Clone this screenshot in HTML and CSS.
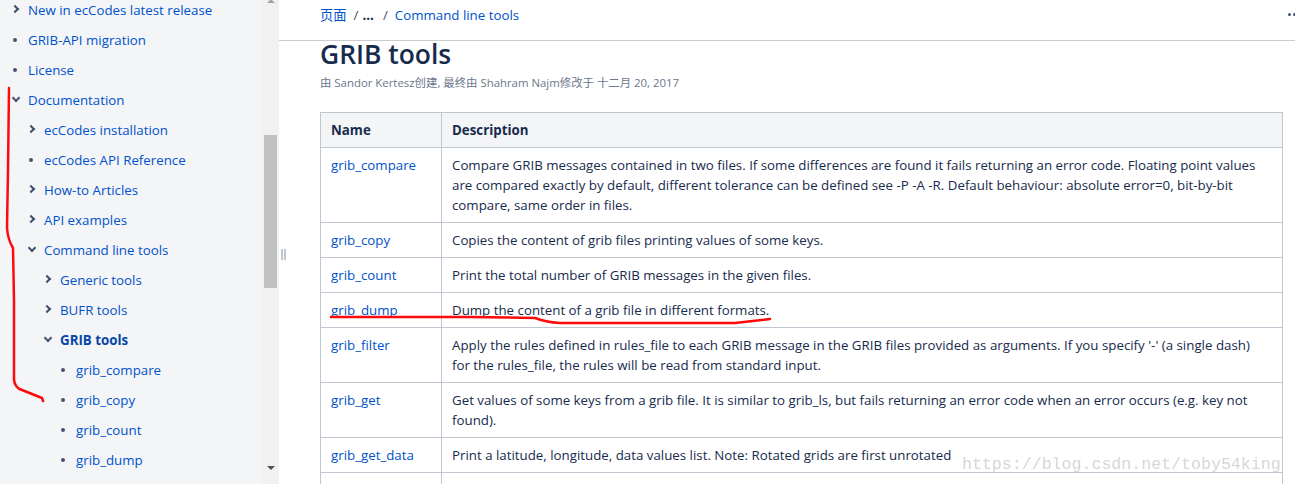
FILE: index.html
```html
<!DOCTYPE html>
<html lang="zh">
<head>
<meta charset="utf-8">
<title>GRIB tools</title>
<link rel="stylesheet" href="styles.css">
</head>
<body>
<div class="page">
  <aside class="sidebar">
    <ul class="tree">
      <li class="item l1"><span class="chev right"></span><a>New in ecCodes latest release</a></li>
      <li class="item l1"><span class="dot"></span><a>GRIB-API migration</a></li>
      <li class="item l1"><span class="dot"></span><a>License</a></li>
      <li class="item l1"><span class="chev down"></span><a>Documentation</a></li>
      <li class="item l2"><span class="chev right"></span><a>ecCodes installation</a></li>
      <li class="item l2"><span class="dot"></span><a>ecCodes API Reference</a></li>
      <li class="item l2"><span class="chev right"></span><a>How-to Articles</a></li>
      <li class="item l2"><span class="chev right"></span><a>API examples</a></li>
      <li class="item l2"><span class="chev down"></span><a>Command line tools</a></li>
      <li class="item l3"><span class="chev right"></span><a>Generic tools</a></li>
      <li class="item l3"><span class="chev right"></span><a>BUFR tools</a></li>
      <li class="item l3 current"><span class="chev down"></span><a>GRIB tools</a></li>
      <li class="item l4"><span class="dot"></span><a>grib_compare</a></li>
      <li class="item l4"><span class="dot"></span><a>grib_copy</a></li>
      <li class="item l4"><span class="dot"></span><a>grib_count</a></li>
      <li class="item l4"><span class="dot"></span><a>grib_dump</a></li>
    </ul>
  </aside>
  <div class="scrollbar">
    <div class="sb-up"></div>
    <div class="sb-thumb"></div>
    <div class="sb-down"></div>
  </div>
  <main class="main">
    <div class="handle"><span></span><span></span></div>
    <header class="topbar">
      <nav class="crumbs"><a>页面</a><span class="sep">/</span><span class="ell">...</span><span class="sep sep-last">/</span><a>Command line tools</a></nav>
      <div class="more"><span></span><span></span><span></span></div>
    </header>
    <h1 class="title">GRIB tools</h1>
    <div class="byline">由 Sandor Kertesz创建, 最终由 Shahram Najm修改于 十二月 20, 2017</div>
    <table class="tools">
      <colgroup><col class="col-name"><col></colgroup>
      <thead>
        <tr><th>Name</th><th>Description</th></tr>
      </thead>
      <tbody>
        <tr><td><a>grib_compare</a></td><td>Compare GRIB messages contained in two files. If some differences are found it fails returning an error code. Floating point values are compared exactly by default, different tolerance can be defined see -P -A -R. Default behaviour: absolute error=0, bit-by-bit compare, same order in files.</td></tr>
        <tr><td><a>grib_copy</a></td><td>Copies the content of grib files printing values of some keys.</td></tr>
        <tr><td><a>grib_count</a></td><td>Print the total number of GRIB messages in the given files.</td></tr>
        <tr><td><a>grib_dump</a></td><td>Dump the content of a grib file in different formats.</td></tr>
        <tr><td><a>grib_filter</a></td><td>Apply the rules defined in rules_file to each GRIB message in the GRIB files provided as arguments. If you specify '-' (a single dash)<br>for the rules_file, the rules will be read from standard input.</td></tr>
        <tr><td><a>grib_get</a></td><td>Get values of some keys from a grib file. It is similar to grib_ls, but fails returning an error code when an error occurs (e.g. key not found).</td></tr>
        <tr><td><a>grib_get_data</a></td><td>Print a latitude, longitude, data values list. Note: Rotated grids are first unrotated</td></tr>
        <tr class="empty"><td></td><td></td></tr>
      </tbody>
    </table>
  </main>
</div>
<div class="watermark">https://blog.csdn.net/toby54king</div>
<svg class="ink" width="1295" height="484" viewBox="0 0 1295 484">
  <path d="M9 88 L8 170 L7 228 Q8 240 13 248 L14 300 L14 380 Q15 388 22 390 L42 398 L43 401" />
  <path d="M331 317 L470 317 L535 318 Q545 322 560 323 L735 323 L770 319" />
</svg>
</body>
</html>
```

FILE: styles.css
```css
* { box-sizing: border-box; }
html, body { margin: 0; padding: 0; }
body {
  width: 1295px;
  height: 484px;
  overflow: hidden;
  font-family: "Open Sans", "Noto Sans", "Noto Sans CJK SC", sans-serif;
  font-size: 13.3px;
  color: #172b4d;
  background: #fff;
  position: relative;
}
a { color: #0052cc; text-decoration: none; }

.page { display: flex; height: 484px; }

/* sidebar */
.sidebar {
  width: 262px;
  flex: none;
  background: #f4f5f7;
  overflow: hidden;
}
.tree { list-style: none; margin: -5px 0 0 0; padding: 0; }
.item {
  height: 30px;
  display: flex;
  align-items: center;
  white-space: nowrap;
}
.item a { line-height: 20px; }
.l1 { padding-left: 10px; }
.l2 { padding-left: 26px; }
.l3 { padding-left: 42px; }
.l4 { padding-left: 58px; }
.current a { font-weight: 700; color: #0747a6; }
.chev, .dot {
  width: 18px;
  height: 20px;
  flex: none;
  position: relative;
}
.dot::before {
  content: "";
  position: absolute;
  left: 3px; top: 8px;
  width: 4px; height: 4px;
  border-radius: 50%;
  background: #42526e;
}
.chev::before {
  content: "";
  position: absolute;
  width: 4px; height: 4px;
  border-right: 2px solid #42526e;
  border-bottom: 2px solid #42526e;
}
.chev.right::before { left: 2px; top: 6px; transform: rotate(-45deg); }
.chev.down::before { left: 3px; top: 5px; transform: rotate(45deg); }

/* scrollbar */
.scrollbar {
  width: 17px;
  flex: none;
  background: #f1f1f1;
  display: flex;
  flex-direction: column;
  align-items: center;
  position: relative;
}
.sb-up {
  width: 0; height: 0;
  border-left: 4px solid transparent;
  border-right: 4px solid transparent;
  border-bottom: 4px solid #a3a3a3;
  margin-top: -1px;
}
.sb-thumb {
  width: 13px;
  height: 153px;
  margin-top: 132px;
  background: #c1c1c1;
}
.sb-down {
  width: 0; height: 0;
  margin-top: auto;
  margin-bottom: 14px;
  border-left: 4px solid transparent;
  border-right: 4px solid transparent;
  border-top: 4px solid #505050;
}

/* main */
.main {
  flex: 1;
  position: relative;
  padding: 0 12px 0 41px;
  min-width: 0;
}
.handle {
  position: absolute;
  left: 2px; top: 249px;
  display: flex; gap: 1px;
}
.handle span { width: 2px; height: 11px; background: #c1c7d0; }

.topbar {
  height: 41px;
  margin-left: -41px;
  margin-right: -12px;
  padding: 5px 0 0 41px;
  border-bottom: 1px solid #cccccc;
  display: flex;
  justify-content: space-between;
}
.crumbs { line-height: 20px; display: flex; align-items: baseline; }
.crumbs .sep { color: #42526e; margin: 0 4px 0 7px; }
.crumbs .sep-last { margin: 0 7px 0 9px; }
.crumbs .ell { font-weight: 700; color: #172b4d; }
.more { display: flex; gap: 2px; padding-top: 8px; margin-right: -6px; }
.more span { width: 3px; height: 3px; background: #42526e; border-radius: 50%; }

.title {
  margin: 0;
  font-size: 26.4px;
  font-weight: 600;
  line-height: 26px;
  padding-top: 0;
  color: #172b4d;
}
.byline {
  margin-top: 8px;
  font-size: 11.4px;
  line-height: 16px;
  color: #6b778c;
}

.tools {
  margin-top: 21px;
  width: 963px;
  border-collapse: collapse;
  table-layout: fixed;
}
.col-name { width: 121px; }
.tools th, .tools td {
  border: 1px solid #c1c7d0;
  padding: 7px 10px;
  line-height: 20px;
  text-align: left;
  vertical-align: top;
}
.tools .empty td { height: 35px; }
.tools th { background: #f4f5f7; font-weight: 700; color: #172b4d; }

.watermark {
  position: absolute;
  left: 962px; top: 454px;
  font-family: "Liberation Mono", monospace;
  font-size: 16.6px;
  line-height: 22px;
  color: rgba(150,150,150,0.4);
  white-space: nowrap;
  pointer-events: none;
}
.ink {
  position: absolute;
  left: 0; top: 0;
  pointer-events: none;
}
.ink path { fill: none; stroke: #ff0a0a; stroke-width: 2.5; stroke-linecap: round; stroke-linejoin: round; }
```
